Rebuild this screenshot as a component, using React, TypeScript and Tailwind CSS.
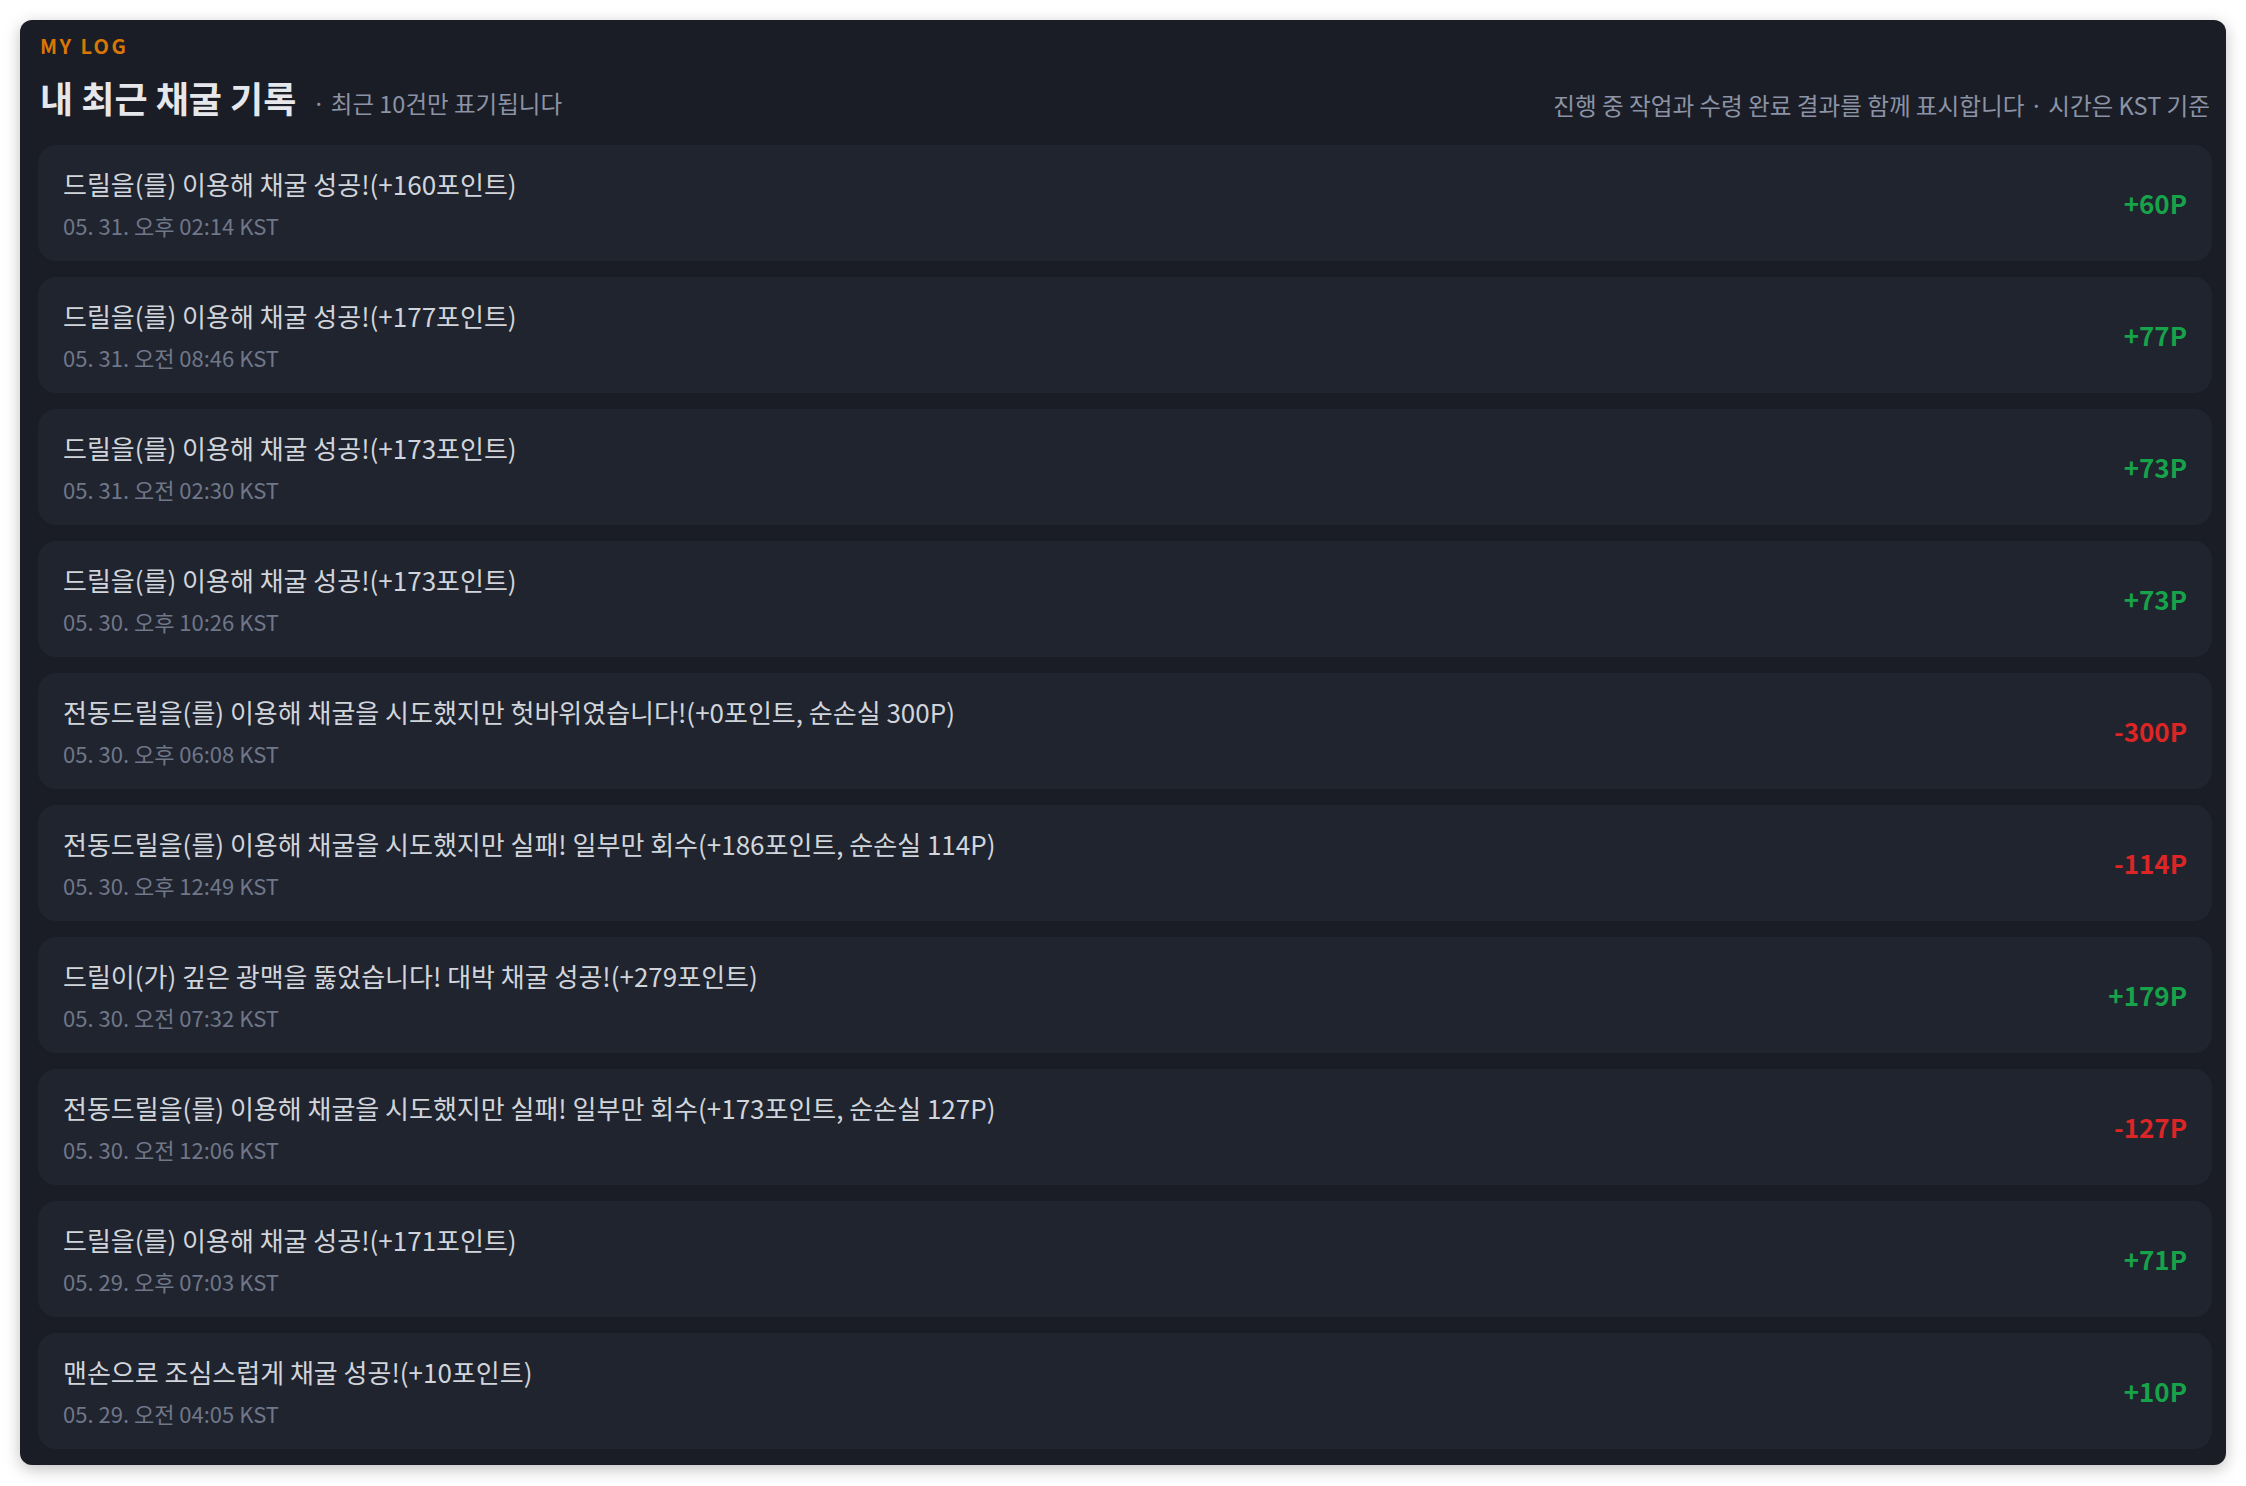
import React from 'react';

const logs = [
  { msg: '드릴을(를) 이용해 채굴 성공!(+160포인트)', time: '05. 31. 오후 02:14 KST', amount: '+60P', up: true },
  { msg: '드릴을(를) 이용해 채굴 성공!(+177포인트)', time: '05. 31. 오전 08:46 KST', amount: '+77P', up: true },
  { msg: '드릴을(를) 이용해 채굴 성공!(+173포인트)', time: '05. 31. 오전 02:30 KST', amount: '+73P', up: true },
  { msg: '드릴을(를) 이용해 채굴 성공!(+173포인트)', time: '05. 30. 오후 10:26 KST', amount: '+73P', up: true },
  { msg: '전동드릴을(를) 이용해 채굴을 시도했지만 헛바위였습니다!(+0포인트, 순손실 300P)', time: '05. 30. 오후 06:08 KST', amount: '-300P', up: false },
  { msg: '전동드릴을(를) 이용해 채굴을 시도했지만 실패! 일부만 회수(+186포인트, 순손실 114P)', time: '05. 30. 오후 12:49 KST', amount: '-114P', up: false },
  { msg: '드릴이(가) 깊은 광맥을 뚫었습니다! 대박 채굴 성공!(+279포인트)', time: '05. 30. 오전 07:32 KST', amount: '+179P', up: true },
  { msg: '전동드릴을(를) 이용해 채굴을 시도했지만 실패! 일부만 회수(+173포인트, 순손실 127P)', time: '05. 30. 오전 12:06 KST', amount: '-127P', up: false },
  { msg: '드릴을(를) 이용해 채굴 성공!(+171포인트)', time: '05. 29. 오후 07:03 KST', amount: '+71P', up: true },
  { msg: '맨손으로 조심스럽게 채굴 성공!(+10포인트)', time: '05. 29. 오전 04:05 KST', amount: '+10P', up: true },
];

export default function App() {
  return (
    <div className="min-h-screen bg-white p-5 font-['Noto_Sans_CJK_KR',sans-serif]">
      <section className="rounded-xl bg-[#1a1d25] pl-[18px] pr-[14px] pt-4 pb-4 shadow-[0_4px_16px_rgba(0,0,0,0.25)]">
        {/* Header */}
        <div className="flex items-end justify-between pl-0.5 pr-0.5">
          <div>
            <p className="text-[20px] font-bold leading-5 tracking-[0.12em] text-[#d97706]">MY LOG</p>
            <div className="mt-[17px] flex items-baseline gap-4">
              <h2 className="text-[36px] font-bold leading-[48px] text-[#e5e7eb]">내 최근 채굴 기록</h2>
              <span className="text-[23.5px] text-[#8b93a5]">· 최근 10건만 표기됩니다</span>
            </div>
          </div>
          <p className="text-[23.6px] leading-8 text-[#8b93a5]">
            진행 중 작업과 수령 완료 결과를 함께 표시합니다 · 시간은 KST 기준
          </p>
        </div>

        {/* Rows */}
        <ul className="mt-6 flex flex-col gap-4">
          {logs.map((log, i) => (
            <li
              key={i}
              className="flex h-[116px] items-center justify-between rounded-[18px] bg-[#20242f] px-[25px]"
            >
              <div className="-mt-0.5 flex flex-col">
                <span className="text-[26px] leading-[40px] text-[#d1d5db]">{log.msg}</span>
                <span className="mt-1.5 text-[22px] leading-[30px] text-[#6f7789]">{log.time}</span>
              </div>
              <span
                className={
                  log.up
                    ? '-mt-0.5 text-[26px] font-bold text-[#16a34a]'
                    : '-mt-0.5 text-[26px] font-bold text-[#dc2626]'
                }
              >
                {log.amount}
              </span>
            </li>
          ))}
        </ul>
      </section>
    </div>
  );
}
